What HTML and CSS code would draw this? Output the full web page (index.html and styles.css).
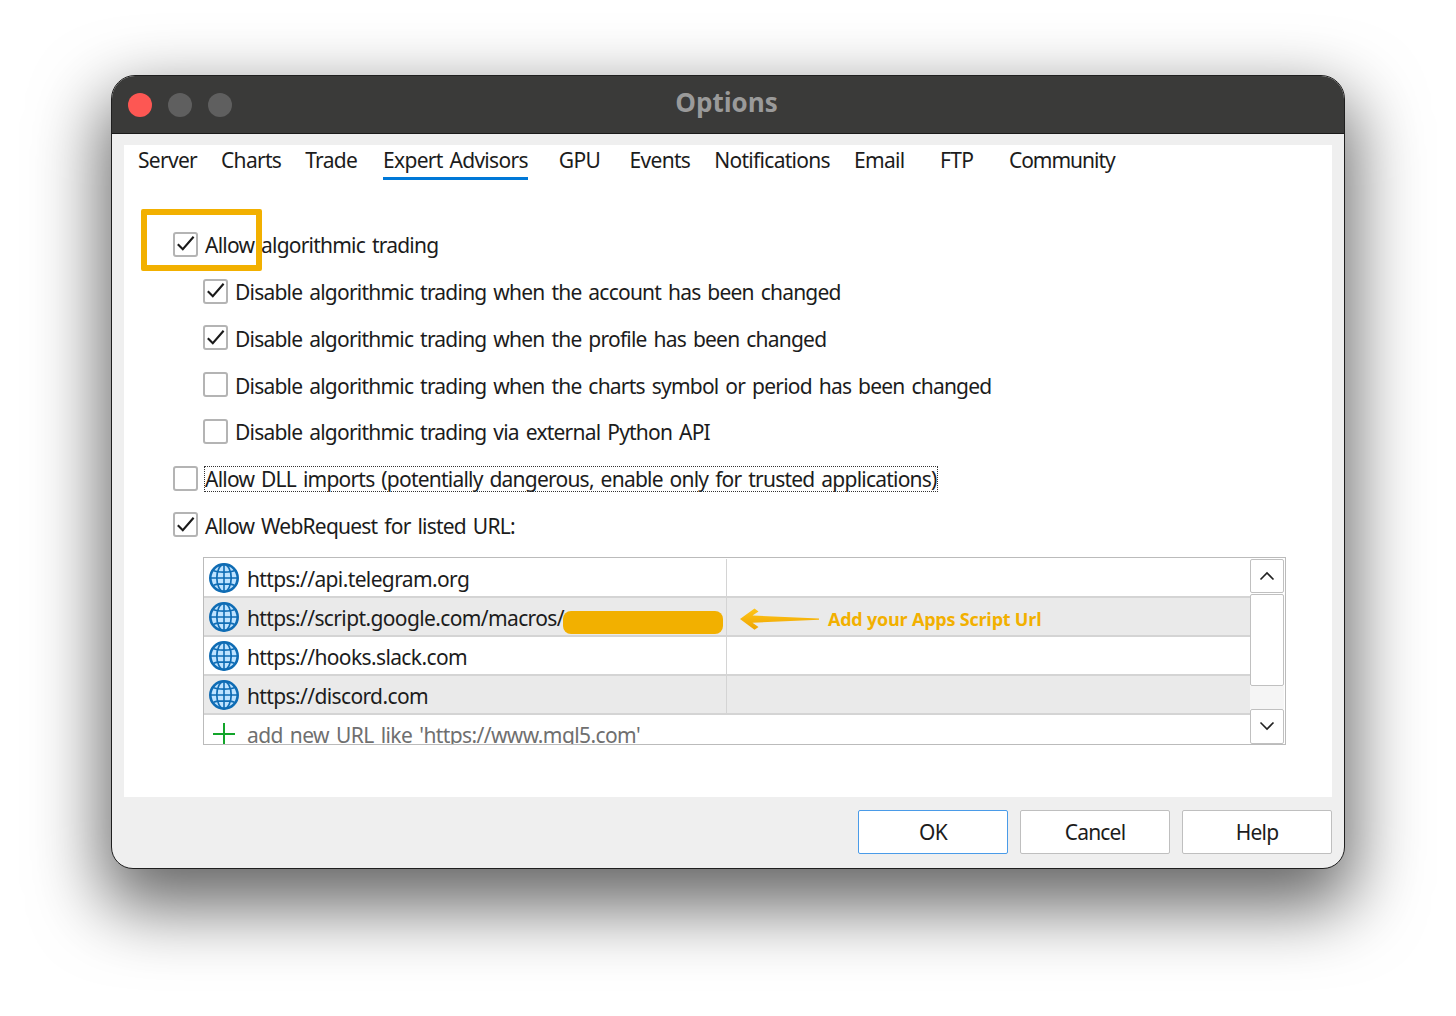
FILE: index.html
```html
<!DOCTYPE html>
<html lang="en">
<head>
<meta charset="utf-8">
<title>Options</title>
<link rel="stylesheet" href="styles.css">
</head>
<body>
<svg class="defs" width="0" height="0" aria-hidden="true">
  <defs>
    <symbol id="globe" viewBox="0 0 30 30">
      <circle cx="15" cy="15" r="13.7" fill="#bfe3ff" stroke="#0f6cb4" stroke-width="2.6"/>
      <ellipse cx="15" cy="15" rx="7.2" ry="13.7" fill="none" stroke="#0f6cb4" stroke-width="1.7"/>
      <path d="M15 1.5V28.5M1.5 15H28.5M4.6 7.8C9 9.6 21 9.6 25.4 7.8M4.6 22.2C9 20.4 21 20.4 25.4 22.2" fill="none" stroke="#0f6cb4" stroke-width="1.6"/>
    </symbol>
    <symbol id="tick" viewBox="0 0 24 24">
      <path d="M3.8 12.2L8.8 17.2L19.6 4.8" fill="none" stroke="#1a1a1a" stroke-width="2.1"/>
    </symbol>
    <linearGradient id="arrowfill" x1="0" y1="0" x2="0" y2="1">
      <stop offset="0" stop-color="#ffc61a"/>
      <stop offset="1" stop-color="#eea400"/>
    </linearGradient>
  </defs>
</svg>
<main class="window">
  <header class="titlebar">
    <div class="lights">
      <span class="light light-close"></span>
      <span class="light"></span>
      <span class="light"></span>
    </div>
    <h1 class="title">Options</h1>
  </header>
  <div class="body">
    <section class="panel">
      <nav class="tabs">
        <span class="tab">Server</span>
        <span class="tab">Charts</span>
        <span class="tab">Trade</span>
        <span class="tab tab-active">Expert Advisors</span>
        <span class="tab tab-gpu">GPU</span>
        <span class="tab tab-events">Events</span>
        <span class="tab">Notifications</span>
        <span class="tab">Email</span>
        <span class="tab tab-ftp">FTP</span>
        <span class="tab tab-community">Community</span>
      </nav>
      <div class="options">
        <label class="opt"><span class="box"><svg class="tick"><use href="#tick"/></svg></span><span class="lbl">Allow algorithmic trading</span></label>
        <label class="opt sub"><span class="box"><svg class="tick"><use href="#tick"/></svg></span><span class="lbl">Disable algorithmic trading when the account has been changed</span></label>
        <label class="opt sub"><span class="box"><svg class="tick"><use href="#tick"/></svg></span><span class="lbl">Disable algorithmic trading when the profile has been changed</span></label>
        <label class="opt sub"><span class="box"></span><span class="lbl">Disable algorithmic trading when the charts symbol or period has been changed</span></label>
        <label class="opt sub"><span class="box"></span><span class="lbl">Disable algorithmic trading via external Python API</span></label>
        <label class="opt"><span class="box"></span><span class="lbl lbl-focus">Allow DLL imports (potentially dangerous, enable only for trusted applications)</span></label>
        <label class="opt"><span class="box"><svg class="tick"><use href="#tick"/></svg></span><span class="lbl">Allow WebRequest for listed URL:</span></label>
        <div class="highlight"></div>
      </div>
      <div class="list">
        <div class="rows">
          <div class="row"><div class="cell-url"><svg class="globe"><use href="#globe"/></svg><span class="url">https://api.telegram.org</span></div><div class="cell-note"></div></div>
          <div class="row row-alt"><div class="cell-url"><svg class="globe"><use href="#globe"/></svg><span class="url">https://script.google.com/macros/</span><span class="redact"></span></div>
            <div class="cell-note">
              <svg class="arrow" viewBox="0 0 80 22"><path d="M0 11L14.5 .5L18.5 3.5L12.5 7.6L79 10.4V11.8L12.5 14.8L18.5 19L14.5 21.8Z" fill="url(#arrowfill)"/></svg>
              <span class="note">Add your Apps Script Url</span>
            </div>
          </div>
          <div class="row"><div class="cell-url"><svg class="globe"><use href="#globe"/></svg><span class="url">https://hooks.slack.com</span></div><div class="cell-note"></div></div>
          <div class="row row-alt"><div class="cell-url"><svg class="globe"><use href="#globe"/></svg><span class="url">https://discord.com</span></div><div class="cell-note"></div></div>
          <div class="row-new">
            <svg class="plus" viewBox="0 0 22 22"><path d="M11 0V22M0 11H22" stroke="#12a52a" stroke-width="2"/></svg>
            <span>add new URL like 'https://www.mql5.com'</span>
          </div>
        </div>
        <div class="scrollbar">
          <div class="sb-btn"><svg class="chev" viewBox="0 0 16 10"><path d="M1.5 8.5L8 2L14.5 8.5" fill="none" stroke="#222" stroke-width="1.6"/></svg></div>
          <div class="sb-thumb"></div>
          <div class="sb-track"></div>
          <div class="sb-btn sb-btn-down"><svg class="chev" viewBox="0 0 16 10"><path d="M1.5 1.5L8 8L14.5 1.5" fill="none" stroke="#222" stroke-width="1.6"/></svg></div>
        </div>
      </div>
    </section>
    <footer class="buttons">
      <button class="btn btn-default">OK</button>
      <button class="btn">Cancel</button>
      <button class="btn">Help</button>
    </footer>
  </div>
</main>
</body>
</html>
```

FILE: styles.css
```css
* { box-sizing: border-box; }
html, body { margin: 0; height: 100%; }
body {
  background: #fff;
  font-family: "Noto Sans", "Open Sans", sans-serif;
  font-size: 21px;
  color: #1c1c1c;
  padding: 75px 0 0 111px;
  overflow: hidden;
}
.defs { position: absolute; }
.window {
  width: 1234px;
  height: 794px;
  background: #efefef;
  border: 1px solid #1f1f1f;
  border-radius: 24px 24px 22px 22px;
  box-shadow: 0 30px 70px 8px rgba(0,0,0,.6);
  overflow: hidden;
  display: flex;
  flex-direction: column;
}
.titlebar {
  height: 58px;
  flex: none;
  background: #3a3a39;
  border-bottom: 1px solid #191919;
  display: flex;
  align-items: center;
  position: relative;
  padding: 0 0 0 16px;
}
.lights { display: flex; gap: 16px; margin-top: 1px; }
.light { width: 24px; height: 24px; border-radius: 50%; background: #5f5f5f; }
.light-close { background: #fd5753; }
.title {
  position: absolute;
  left: 0; right: 3px; top: 9px;
  margin: 0;
  text-align: center;
  font-size: 26px;
  line-height: 34px;
  font-weight: 700;
  color: #9a9a9a;
  font-family: "Open Sans", sans-serif;
}
.body { flex: 1; padding: 11px 12px 13px 12px; display: flex; flex-direction: column; }
.panel { background: #fff; height: 652px; padding: 0 0 0 14px; }
.tabs { display: flex; gap: 24px; height: 35px; padding-top: 0; }
.tab { height: 35px; line-height: 31px; white-space: nowrap; letter-spacing: -.7px; word-spacing: 2px; }
.tab-active { border-bottom: 3px solid #0078d7; margin-left: 2px; }
.tab-gpu { margin-left: 7px; }
.tab-events { margin-left: 5.5px; }
.tab-ftp { margin-left: 11.6px; }
.tab-community { margin-left: 11.7px; letter-spacing: -1px; }
.options { position: relative; padding: 41px 0 0 35px; }
.opt { display: flex; align-items: center; height: 46.75px; gap: 7px; }
.sub { margin-left: 30px; }
.box {
  width: 25px; height: 25px;
  flex: none;
  border: 2px solid #b4b4b4;
  border-radius: 3px;
  background: #fff;
  display: flex;
  align-items: center;
  justify-content: center;
}
.tick { width: 24px; height: 24px; flex: none; }
.lbl { white-space: nowrap; letter-spacing: -.78px; word-spacing: 2.2px; line-height: 24px; margin-top: 2px; }
.lbl-focus { outline: 1px dotted #333; outline-offset: 0; }
.highlight {
  position: absolute;
  left: 3px; top: 29px;
  width: 121px; height: 62px;
  border: 6px solid #f2b000;
  border-radius: 2px;
  pointer-events: none;
}
.list {
  margin: 8.25px 0 0 65px;
  width: 1083px;
  height: 188px;
  border: 1px solid #bbb;
  display: flex;
  background: #fff;
}
.rows { flex: 1; min-width: 0; overflow: hidden; }
.row { height: 39px; display: flex; border-bottom: 2px solid #d4d4d4; }
.row:first-child { height: 40px; padding-top: 1px; }
.row-alt { background: #eaeaea; }
.cell-url {
  width: 523px; flex: none;
  display: flex; align-items: center; gap: 8px;
  padding-left: 5px;
  padding-top: 2px;
  border-right: 1px solid #d4d4d4;
  white-space: nowrap;
  letter-spacing: -.62px;
}
.url { margin-top: 2px; }
.cell-note { flex: 1; display: flex; align-items: center; padding-left: 13px; padding-top: 6px; }
.globe { width: 30px; height: 30px; flex: none; }
.redact {
  width: 160px; height: 23px;
  background: #f2b000;
  border-radius: 8px;
  margin-top: 10px;
  margin-left: -9px;
  flex: none;
}
.arrow { width: 80px; height: 22px; flex: none; }
.note { margin-left: 8px; font-family: "Open Sans", sans-serif; font-weight: 700; font-size: 18px; letter-spacing: -.22px; color: #f2b000; white-space: nowrap; }
.row-new {
  height: 30px;
  display: flex; align-items: flex-start; gap: 12px;
  padding: 8px 0 0 9px;
  color: #6f6f6f;
  white-space: nowrap;
  letter-spacing: -.6px;
  word-spacing: 2.2px;
}
.row-new span { line-height: 24px; }
.plus { width: 22px; height: 22px; flex: none; }
.scrollbar { width: 34px; flex: none; padding-top: 1px; display: flex; flex-direction: column; margin-right: 1px; }
.sb-btn {
  height: 34px;
  flex: none;
  background: #fff;
  border: 1px solid #c0c0c0;
  border-radius: 2px;
  display: flex; align-items: center; justify-content: center;
}
.sb-btn-down { height: 35px; }
.sb-thumb { height: 92px; margin-top: 1px; border: 1px solid #c0c0c0; border-radius: 2px; background: #fff; flex: none; }
.sb-track { flex: 1; background: #f5f5f5; }
.chev { width: 16px; height: 10px; }
.buttons { display: flex; justify-content: flex-end; gap: 12px; margin-top: 13px; }
.btn {
  width: 150px; height: 44px;
  background: #fff;
  border: 1px solid #bfbfbf;
  border-radius: 2px;
  font: inherit;
  color: #1c1c1c;
  padding: 0;
  letter-spacing: -.8px;
}
.btn-default { border-color: #4a9be8; }
```
